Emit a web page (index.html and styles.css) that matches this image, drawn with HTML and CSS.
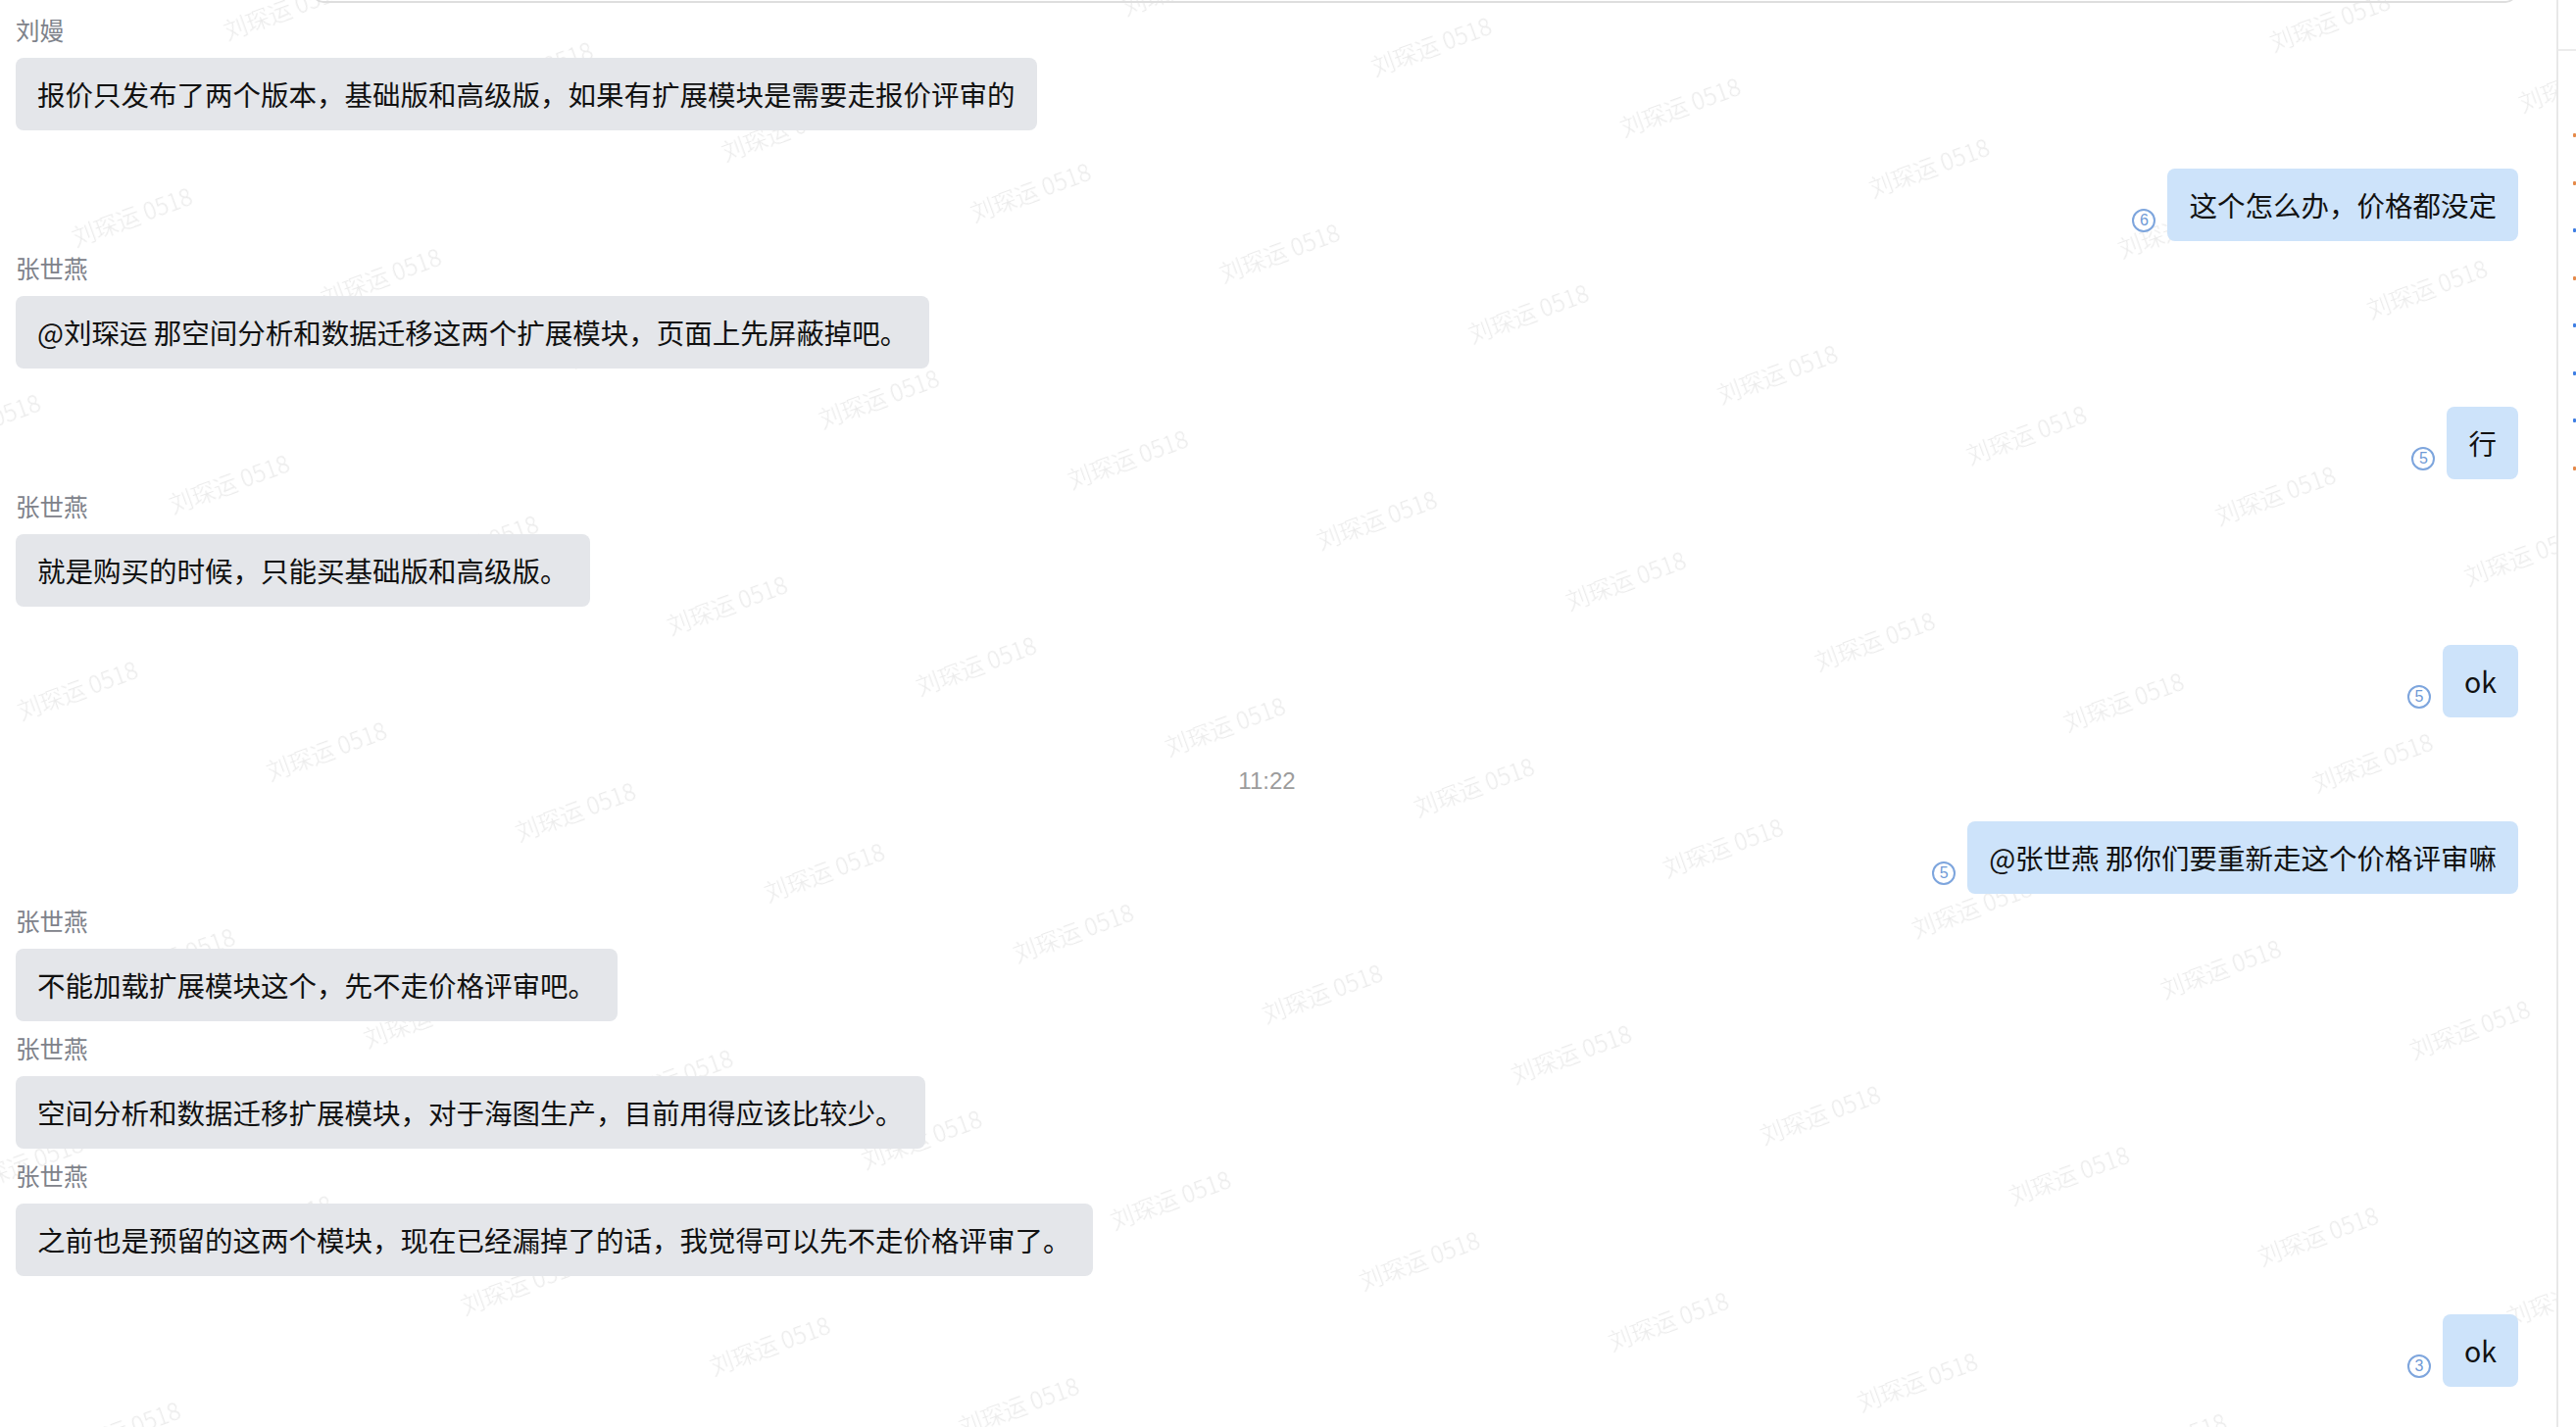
FILE: index.html
```html
<!DOCTYPE html>
<html lang="zh-CN">
<head>
<meta charset="utf-8">
<title>聊天</title>
<link rel="stylesheet" href="styles.css">
</head>
<body>
<div class="page">
  <main class="chat">
    <svg class="watermark" width="100%" height="100%" aria-hidden="true">
      <defs>
        <pattern id="wm" patternUnits="userSpaceOnUse" x="186" y="58" width="435" height="290" patternTransform="rotate(-20)">
          <text class="wm-text" x="18" y="60">刘琛运 0518</text>
          <text class="wm-text" x="235.5" y="205">刘琛运 0518</text>
        </pattern>
      </defs>
      <rect width="100%" height="100%" fill="url(#wm)"></rect>
    </svg>

    <div class="input-edge"></div>

    <div class="msg msg-left">
      <div class="name">刘嫚</div>
      <div class="bubble">报价只发布了两个版本，基础版和高级版，如果有扩展模块是需要走报价评审的</div>
    </div>

    <div class="msg msg-right">
      <span class="badge">6</span>
      <div class="bubble bubble-me">这个怎么办，价格都没定</div>
    </div>

    <div class="msg msg-left">
      <div class="name">张世燕</div>
      <div class="bubble">@刘琛运 那空间分析和数据迁移这两个扩展模块，页面上先屏蔽掉吧。</div>
    </div>

    <div class="msg msg-right">
      <span class="badge">5</span>
      <div class="bubble bubble-me">行</div>
    </div>

    <div class="msg msg-left">
      <div class="name">张世燕</div>
      <div class="bubble">就是购买的时候，只能买基础版和高级版。</div>
    </div>

    <div class="msg msg-right">
      <span class="badge">5</span>
      <div class="bubble bubble-me">ok</div>
    </div>

    <div class="time">11:22</div>

    <div class="msg msg-right">
      <span class="badge">5</span>
      <div class="bubble bubble-me">@张世燕 那你们要重新走这个价格评审嘛</div>
    </div>

    <div class="msg msg-left">
      <div class="name">张世燕</div>
      <div class="bubble">不能加载扩展模块这个，先不走价格评审吧。</div>
    </div>

    <div class="msg msg-left">
      <div class="name">张世燕</div>
      <div class="bubble">空间分析和数据迁移扩展模块，对于海图生产，目前用得应该比较少。</div>
    </div>

    <div class="msg msg-left">
      <div class="name">张世燕</div>
      <div class="bubble">之前也是预留的这两个模块，现在已经漏掉了的话，我觉得可以先不走价格评审了。</div>
    </div>

    <div class="msg msg-right">
      <span class="badge">3</span>
      <div class="bubble bubble-me">ok</div>
    </div>
  </main>

  <aside class="side">
    <div class="side-head"></div>
    <div class="side-list">
      <div class="side-item"><span class="dot dot-orange"></span></div>
      <div class="side-item"><span class="dot dot-orange"></span></div>
      <div class="side-item"><span class="dot dot-blue"></span></div>
      <div class="side-item"><span class="dot dot-orange"></span></div>
      <div class="side-item"><span class="dot dot-blue"></span></div>
      <div class="side-item"><span class="dot dot-blue"></span></div>
      <div class="side-item"><span class="dot dot-blue"></span></div>
      <div class="side-item"><span class="dot dot-orange"></span></div>
    </div>
  </aside>
</div>
</body>
</html>
```

FILE: styles.css
```css
* {
  box-sizing: border-box;
}

html, body {
  margin: 0;
  padding: 0;
  background: #ffffff;
}

body {
  font-family: "Noto Sans CJK SC", "Noto Sans", sans-serif;
  color: #111111;
}

.page {
  display: flex;
  width: 2628px;
  height: 1456px;
  overflow: hidden;
}

.chat {
  position: relative;
  flex: 1;
  display: flex;
  flex-direction: column;
  padding: 0 39px 0 16px;
  overflow: hidden;
}

.watermark {
  position: absolute;
  left: 0;
  top: 0;
  z-index: 0;
  pointer-events: none;
}

.wm-text {
  font-family: "Noto Sans CJK SC", "Noto Sans", sans-serif;
  font-size: 24px;
  font-weight: 300;
  fill: #ebebeb;
}

.input-edge {
  position: relative;
  z-index: 1;
  flex: none;
  height: 12px;
  margin: -9px 1px 0 302px;
  border: 2px solid #dedede;
  border-top: none;
  border-radius: 0 0 12px 12px;
}

.msg {
  position: relative;
  z-index: 1;
  display: flex;
  flex: none;
}

.msg-left {
  flex-direction: column;
  align-items: flex-start;
  gap: 12px;
  padding-top: 12px;
}

.msg-right {
  justify-content: flex-end;
  align-items: flex-end;
  gap: 12px;
  padding-top: 39px;
}

.name {
  font-size: 24.5px;
  line-height: 32px;
  color: #7e828a;
}

.bubble {
  font-size: 28.5px;
  line-height: 40px;
  padding: 17px 22px;
  border-radius: 8px;
  background: #e4e6ea;
  white-space: nowrap;
}

.bubble-me {
  background: #cde3fa;
}

.badge {
  width: 24px;
  height: 24px;
  margin-bottom: 9px;
  border: 2px solid #7da5dd;
  border-radius: 50%;
  display: flex;
  align-items: center;
  justify-content: center;
  font-family: "Liberation Sans", Arial, sans-serif;
  font-size: 16px;
  line-height: 1;
  color: #6f9ad6;
}

.time {
  position: relative;
  z-index: 1;
  flex: none;
  padding-top: 51px;
  line-height: 28px;
  text-align: center;
  font-family: "Liberation Sans", Arial, sans-serif;
  font-size: 24px;
  color: #9c9c9c;
}

.time + .msg-right {
  padding-top: 27px;
}

.side {
  flex: none;
  width: 20px;
  border-left: 2px solid #e8e8e8;
  display: flex;
  flex-direction: column;
}

.side-head {
  height: 52px;
  border-bottom: 2px solid #ececec;
}

.side-list {
  padding-top: 62px;
  display: flex;
  flex-direction: column;
}

.side-item {
  height: 48.5px;
  display: flex;
  align-items: center;
  justify-content: flex-end;
}

.dot {
  width: 3px;
  height: 4px;
  border-radius: 1px;
}

.dot-orange {
  background: #e58a4a;
}

.dot-blue {
  background: #3f7fe4;
}
```
